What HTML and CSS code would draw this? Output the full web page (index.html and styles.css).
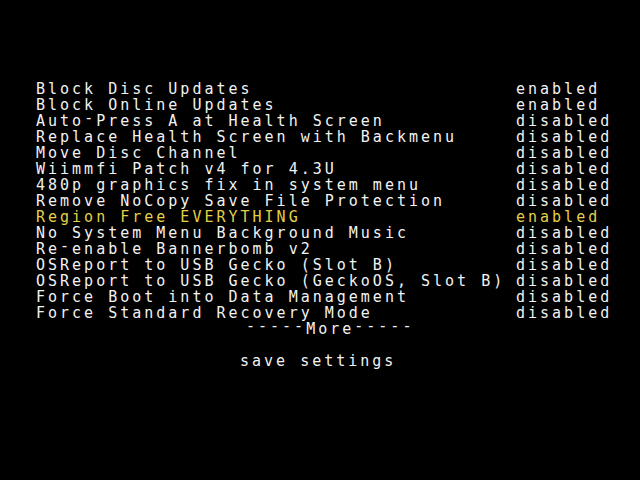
FILE: index.html
```html
<!DOCTYPE html>
<html>
<head>
<meta charset="utf-8">
<link rel="stylesheet" href="styles.css">
</head>
<body>
<div class="screen">
  <div class="menu">
    <div class="row"><span class="label">Block Disc Updates</span><span class="value">enabled</span></div>
    <div class="row"><span class="label">Block Online Updates</span><span class="value">enabled</span></div>
    <div class="row"><span class="label">Auto<span class="dash">-</span>Press A at Health Screen</span><span class="value">disabled</span></div>
    <div class="row"><span class="label">Replace Health Screen with Backmenu</span><span class="value">disabled</span></div>
    <div class="row"><span class="label">Move Disc Channel</span><span class="value">disabled</span></div>
    <div class="row"><span class="label">Wiimmfi Patch v4 for 4.3U</span><span class="value">disabled</span></div>
    <div class="row"><span class="label">480p graphics fix in system menu</span><span class="value">disabled</span></div>
    <div class="row"><span class="label">Remove NoCopy Save File Protection</span><span class="value">disabled</span></div>
    <div class="row selected"><span class="label">Region Free EVERYTHING</span><span class="value">enabled</span></div>
    <div class="row"><span class="label">No System Menu Background Music</span><span class="value">disabled</span></div>
    <div class="row"><span class="label">Re<span class="dash">-</span>enable Bannerbomb v2</span><span class="value">disabled</span></div>
    <div class="row"><span class="label">OSReport to USB Gecko (Slot B)</span><span class="value">disabled</span></div>
    <div class="row"><span class="label">OSReport to USB Gecko (GeckoOS, Slot B)</span><span class="value">disabled</span></div>
    <div class="row"><span class="label">Force Boot into Data Management</span><span class="value">disabled</span></div>
    <div class="row"><span class="label">Force Standard Recovery Mode</span><span class="value">disabled</span></div>
  </div>
  <div class="more"><span class="dash">-----</span>More<span class="dash">-----</span></div>
  <div class="save">save settings</div>
</div>
</body>
</html>
```
FILE: styles.css
```css
html, body {
  margin: 0;
  padding: 0;
  background: #000;
}
.screen {
  width: 640px;
  height: 480px;
  box-sizing: border-box;
  padding-top: 81px;
  font-family: "DejaVu Sans Mono", "Liberation Mono", monospace;
  font-size: 15px;
  line-height: 16px;
  letter-spacing: 3px;
  color: #f2f2f2;
  display: flex;
  flex-direction: column;
}
.menu {
  display: flex;
  flex-direction: column;
  padding-left: 36px;
}
.row {
  display: grid;
  grid-template-columns: 480px auto;
  height: 16px;
  white-space: nowrap;
}
.row.selected {
  color: #e2d048;
}
.dash {
  vertical-align: 3px;
  line-height: 0;
}
.more {
  height: 16px;
  padding-left: 246px;
  white-space: nowrap;
}
.save {
  margin-top: 16px;
  height: 16px;
  padding-left: 240px;
  white-space: nowrap;
}
```
